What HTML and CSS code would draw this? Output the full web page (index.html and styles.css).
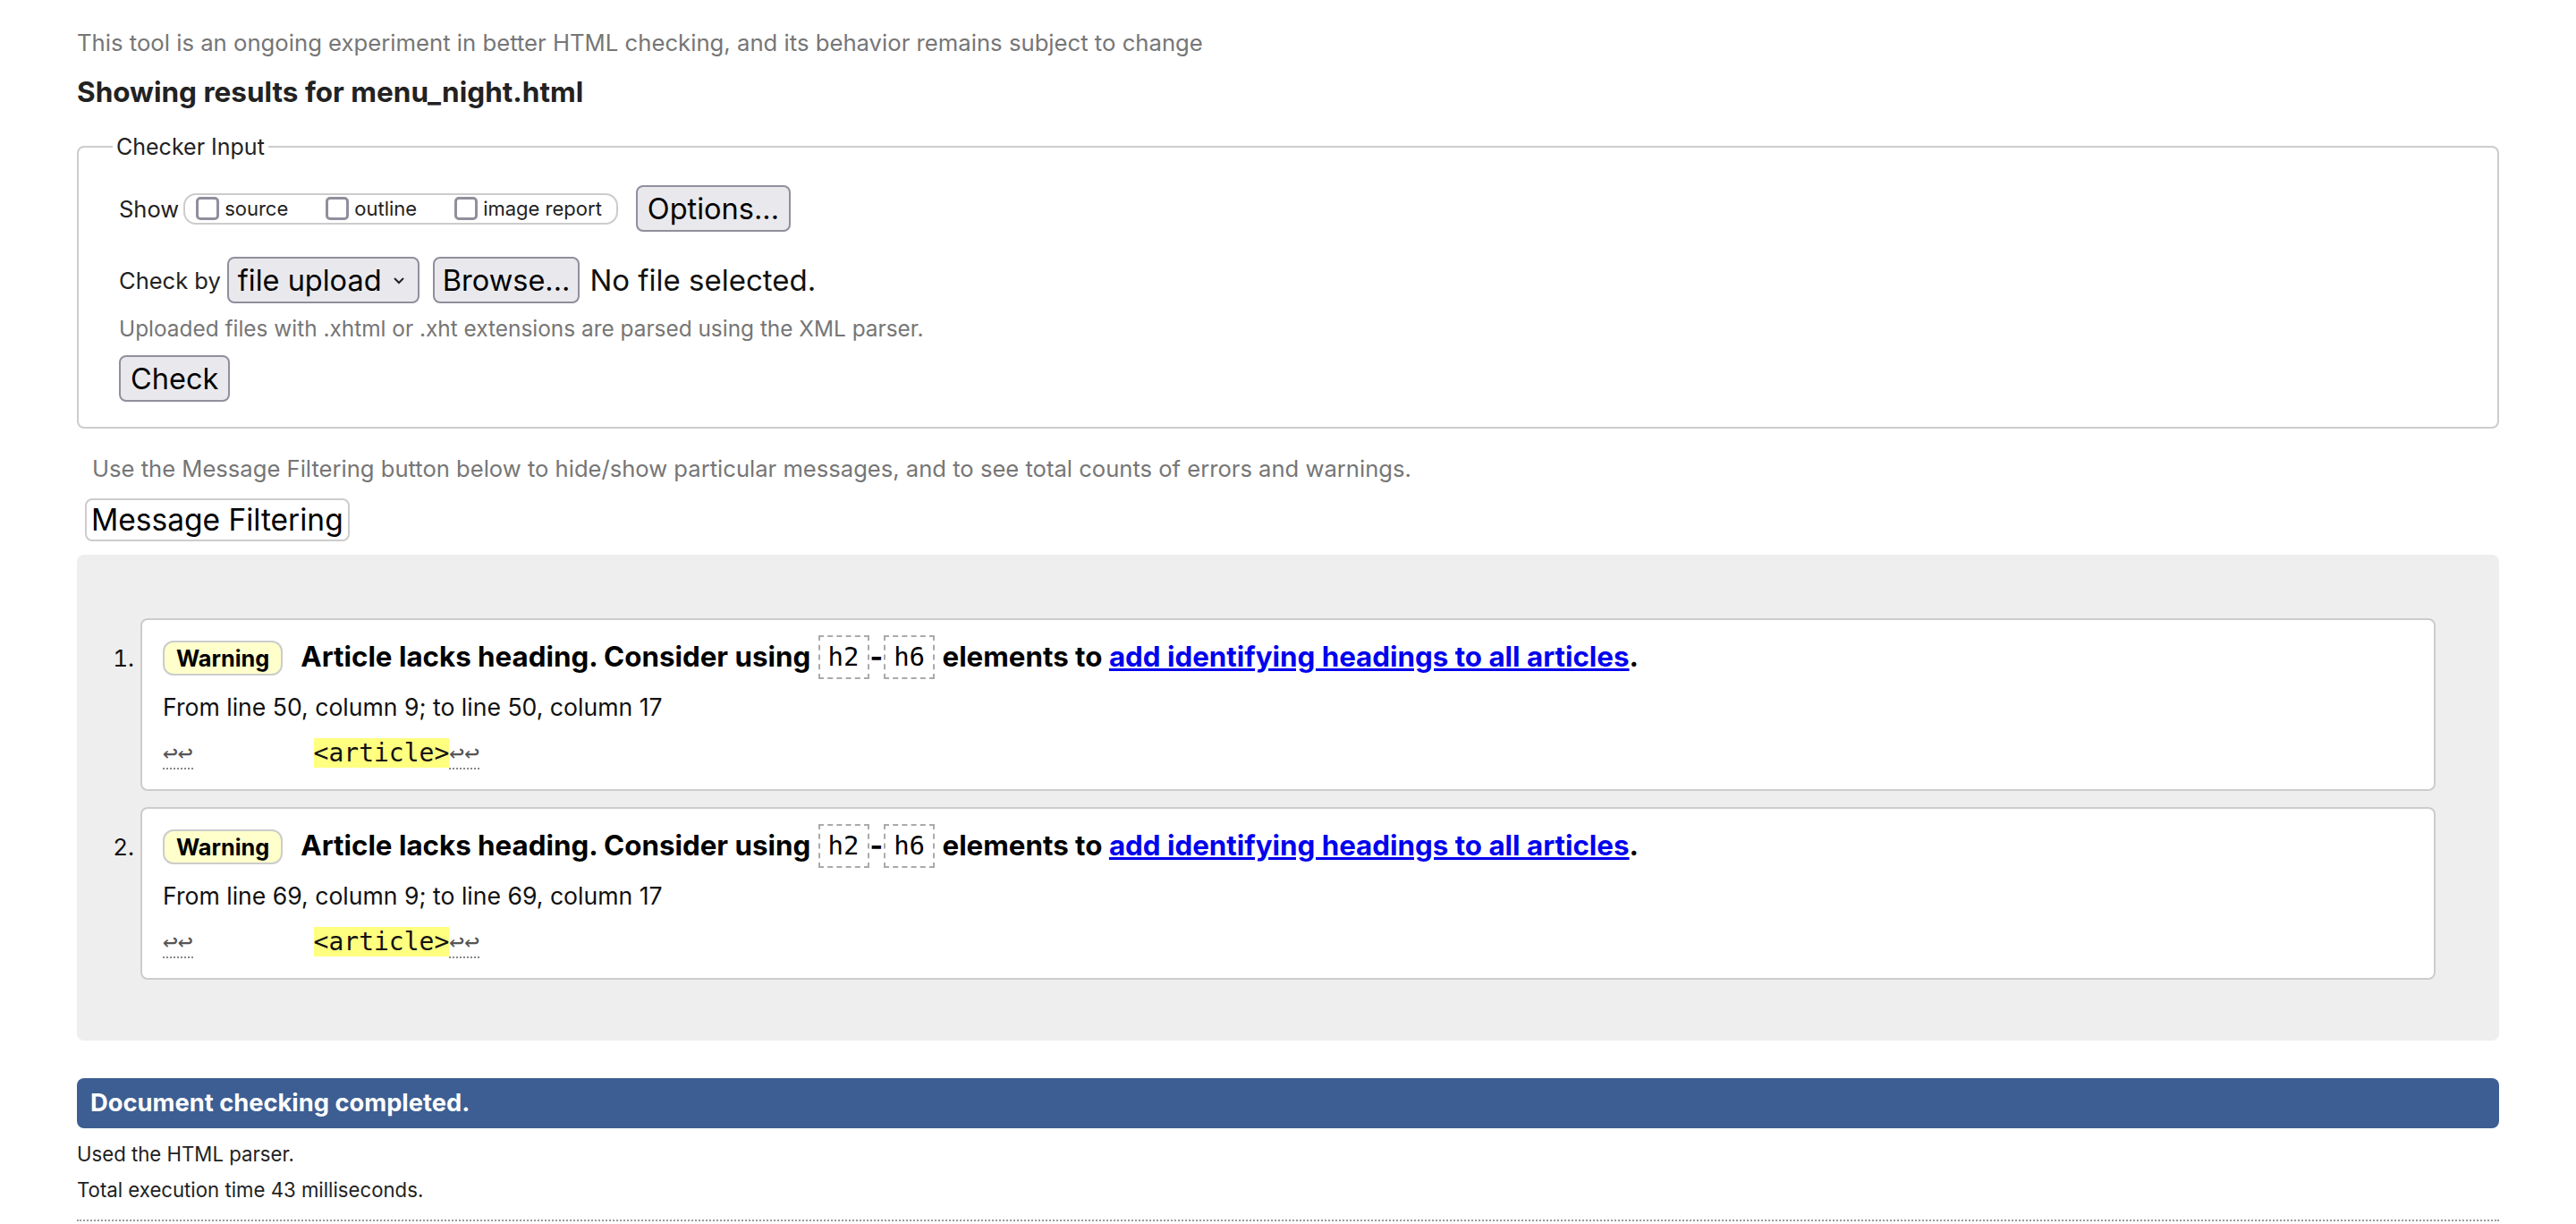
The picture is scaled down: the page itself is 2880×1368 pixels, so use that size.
FILE: index.html
```html
<!DOCTYPE html>
<html lang="en">
<head>
<meta charset="utf-8">
<title>Showing results for menu_night.html - Nu Html Checker</title>
<link rel="stylesheet" href="styles.css">
</head>
<body>
<p class="intro">This tool is an ongoing experiment in better HTML checking, and its behavior remains subject to change</p>
<h1 class="title">Showing results for menu_night.html</h1>
<form class="checker">
  <fieldset class="fs">
    <legend class="legend">Checker Input</legend>
    <div class="row">
      <span class="label">Show</span>
      <span class="pill">
        <label class="opt"><span class="cb"></span>source</label>
        <label class="opt"><span class="cb"></span>outline</label>
        <label class="opt"><span class="cb"></span>image report</label>
      </span>
      <span class="btn opts-btn">Options...</span>
    </div>
    <div class="row row-check">
      <span class="label">Check by</span>
      <span class="btn select">file upload<svg class="chev" width="14" height="9" viewBox="0 0 14 9"><polyline points="2,2 7,7 12,2" fill="none" stroke="#222" stroke-width="2"/></svg></span>
      <span class="btn browse">Browse...</span>
      <span class="nofile">No file selected.</span>
    </div>
    <p class="hint">Uploaded files with .xhtml or .xht extensions are parsed using the XML parser.</p>
    <div class="row row-submit">
      <span class="btn">Check</span>
    </div>
  </fieldset>
</form>
<p class="filter-note">Use the Message Filtering button below to hide/show particular messages, and to see total counts of errors and warnings.</p>
<button type="button" class="filter-btn">Message Filtering</button>
<div class="results">
  <ol class="msgs">
    <li class="msg">
      <p class="msg-head"><strong class="badge">Warning</strong><span>Article lacks heading. Consider using <code class="el">h2</code>-<code class="el">h6</code> elements to <a href="#" class="link">add identifying headings to all articles</a>.</span></p>
      <p class="loc">From line 50, column 9; to line 50, column 17</p>
      <p class="extract"><span class="lf">↩↩</span>        <span class="hl">&lt;article&gt;</span><span class="lf">↩↩</span></p>
    </li>
    <li class="msg">
      <p class="msg-head"><strong class="badge">Warning</strong><span>Article lacks heading. Consider using <code class="el">h2</code>-<code class="el">h6</code> elements to <a href="#" class="link">add identifying headings to all articles</a>.</span></p>
      <p class="loc">From line 69, column 9; to line 69, column 17</p>
      <p class="extract"><span class="lf">↩↩</span>        <span class="hl">&lt;article&gt;</span><span class="lf">↩↩</span></p>
    </li>
  </ol>
</div>
<p class="done">Document checking completed.</p>
<p class="meta">Used the HTML parser.</p>
<p class="meta">Total execution time 43 milliseconds.</p>
<hr class="dots">
</body>
</html>
```
FILE: styles.css
```css
html {
  background: #fff;
}
body {
  margin: 0;
  padding: 0 86px;
  font-family: Inter, "Noto Sans", sans-serif;
  color: #000;
}
.intro {
  margin: 33px 0 0;
  font-size: 25.7px;
  line-height: 30px;
  color: #767676;
}
.title {
  margin: 22px 0 0;
  font-size: 31.5px;
  line-height: 36px;
  font-weight: 700;
  color: #222;
}
.checker {
  margin: 28px 0 0;
}
.fs {
  margin: 0;
  min-width: 0;
  border: 2px solid #ccc;
  border-radius: 8px;
  padding: 28px 45px 28px;
}
.legend {
  font-size: 25px;
  line-height: 30px;
  padding: 0 4px;
  margin-left: -7px;
  color: #222;
}
.row {
  display: flex;
  align-items: center;
  height: 52px;
}
.row-check {
  margin-top: 28px;
}
.row-submit {
  margin-top: 16px;
}
.label {
  font-size: 25.5px;
  color: #222;
}
.pill {
  display: flex;
  align-items: center;
  gap: 42px;
  box-sizing: border-box;
  height: 35px;
  margin-left: 5px;
  padding: 0 16px 0 12px;
  border: 2px solid #ccc;
  border-radius: 14px;
}
.opt {
  display: flex;
  align-items: center;
  gap: 6px;
  font-size: 22px;
  color: #222;
}
.cb {
  display: block;
  width: 26px;
  height: 26px;
  box-sizing: border-box;
  border: 3px solid #8f8f9d;
  border-radius: 5px;
  background: #fff;
}
.btn {
  display: inline-flex;
  align-items: center;
  box-sizing: border-box;
  height: 52px;
  padding: 0 11px;
  font-family: Inter, "Noto Sans", sans-serif;
  font-size: 32.5px;
  color: #000;
  background: #e9e9ed;
  border: 2px solid #8f8f9d;
  border-radius: 8px;
}
.opts-btn {
  margin-left: 20px;
}
.select {
  margin-left: 7px;
  width: 215px;
  justify-content: space-between;
  padding: 0 14px 0 10px;
}
.chev {
  display: block;
}
.browse {
  margin-left: 15px;
  padding: 0 9px;
}
.nofile {
  margin-left: 11px;
  font-size: 33px;
  color: #111;
}
.hint {
  margin: 14px 0 0;
  font-size: 24.4px;
  line-height: 28px;
  color: #767676;
}
.filter-note {
  margin: 30px 0 0;
  padding-left: 17px;
  font-size: 25.6px;
  line-height: 30px;
  color: #767676;
}
.filter-btn {
  display: block;
  margin: 18px 0 0 9px;
  height: 48px;
  padding: 0 5px;
  font-family: Inter, "Noto Sans", sans-serif;
  font-size: 33.5px;
  color: #000;
  background: #fff;
  border: 2px solid #ccc;
  border-radius: 8px;
}
.results {
  margin-top: 15px;
  background: #eee;
  border-radius: 8px;
  padding: 71px 71px 68px 0;
}
.msgs {
  margin: 0;
  padding: 0 0 0 71px;
}
.msg {
  background: #fff;
  border: 2px solid #ccc;
  border-radius: 8px;
  padding: 17px 23px 24px;
  margin-bottom: 18px;
  font-size: 26px;
  color: #111;
}
.msg:last-child {
  margin-bottom: 0;
}
.msg::marker {
  font-size: 26px;
}
.msg-head {
  margin: 0;
  font-size: 31.3px;
  line-height: 49px;
  font-weight: 700;
  color: #000;
}
.badge {
  display: inline-block;
  vertical-align: top;
  box-sizing: border-box;
  height: 39px;
  margin: 6px 20px 0 0;
  padding: 0 13px;
  font-size: 25.3px;
  line-height: 35px;
  font-weight: 700;
  background: #ffffcc;
  border: 2px solid #ccc;
  border-radius: 12px;
}
.el {
  display: inline-block;
  vertical-align: top;
  box-sizing: border-box;
  height: 49px;
  margin: 0 1px;
  padding: 0 9px;
  border: 2px dashed #aaa;
  font-family: "DejaVu Sans Mono", monospace;
  font-size: 29px;
  font-weight: 400;
  line-height: 45px;
}
.link {
  color: #0000ee;
  text-decoration: underline;
}
.loc {
  margin: 16px 0 0;
  font-size: 26.6px;
  line-height: 30px;
}
.extract {
  margin: 20px 0 0;
  font-family: "DejaVu Sans Mono", monospace;
  font-size: 28px;
  line-height: 33px;
  white-space: pre;
}
.hl {
  background: #ffff80;
}
.lf {
  color: #555;
  border-bottom: 2px dotted #888;
}
.done {
  margin: 42px 0 0;
  height: 56px;
  box-sizing: border-box;
  padding: 0 15px;
  background: #3d5e92;
  color: #fff;
  font-size: 27.3px;
  line-height: 56px;
  font-weight: 700;
  border-radius: 8px;
}
.meta {
  margin: 16px 0 0;
  font-size: 22.2px;
  line-height: 26px;
  color: #222;
}
.meta + .meta {
  margin-top: 14px;
}
.dots {
  margin: 20px 0 0;
  height: 0;
  border: 0;
  border-top: 2px dotted #999;
}
```
